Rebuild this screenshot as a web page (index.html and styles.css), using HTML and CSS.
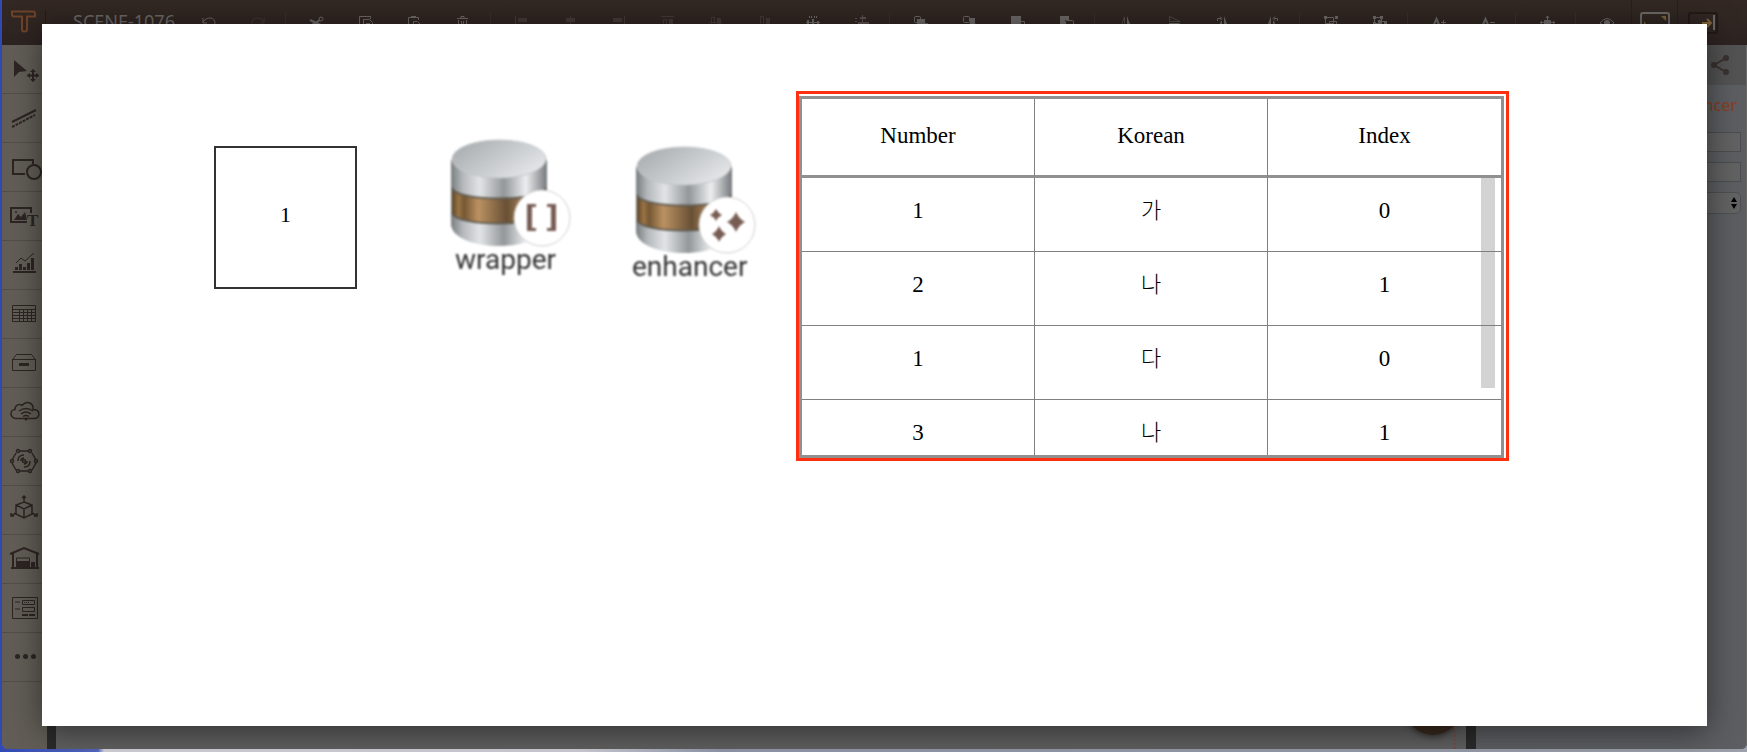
FILE: index.html
```html
<!DOCTYPE html>
<html lang="en">
<head>
<meta charset="utf-8">
<title>SCENE-1076</title>
<link rel="stylesheet" href="styles.css">
</head>
<body>
<div class="app">
  <header class="topbar">
    <a class="logo" href="#" aria-label="Home"><svg width="34" height="34" viewBox="0 0 34 34"><path d="M5 5.500h21q2 0 2 2v3h-8v13q0 2-2 2h-1q-2 0-2-2v-13h-8q-2 0-2-2v-3z"/></svg></a>
    <h1 class="title">SCENE-1076</h1>
    <div class="tools">
      <button aria-label="Undo"><svg viewBox="0 0 20 20"><path class="o" d="M8 10H4V5M4 9c4-6 12-5 12 1q0 5-6 6"/></svg></button>
      <button class="dim" aria-label="Redo"><svg viewBox="0 0 20 20"><path class="o" d="M12 10h4V5M16 9c-4-6-12-5-12 1q0 5 6 6"/></svg></button>
      <i class="sep"></i>
      <button aria-label="Cut"><svg viewBox="0 0 20 20"><path class="o" stroke-width="2" d="M3 7l13 6M3 13l10-6"/><circle class="o" cx="14" cy="6" r="2"/><circle class="o" cx="15" cy="14" r="2"/></svg></button>
      <button aria-label="Copy"><svg viewBox="0 0 20 20"><path class="o" d="M6 15H3.500V3.500h11V6M7.500 6.500h6l3 3v8h-9zM10 10.500h4M10 13.500h4"/></svg></button>
      <button aria-label="Paste"><svg viewBox="0 0 20 20"><path class="o" d="M7 16H4.500V4.500h10V7M7 3.500h5M9.500 8.500h4l3 3v6h-7z"/></svg></button>
      <button aria-label="Delete"><svg viewBox="0 0 20 20"><path class="o" d="M4 5.500h11M8 5V3.500h3V5M5.500 7v10h8V7M8.500 8v8M10.500 8v8"/></svg></button>
      <i class="sep"></i>
      <button class="dim" aria-label="Align left"><svg viewBox="0 0 20 20"><path d="M3 3h1v15H3zM6 5h9v4H6zM6 11h11v4H6z"/></svg></button>
      <button class="dim" aria-label="Align center"><svg viewBox="0 0 20 20"><path d="M9 3h1v15H9zM5 5h9v4H5zM4 11h11v4H4z"/></svg></button>
      <button class="dim" aria-label="Align right"><svg viewBox="0 0 20 20"><path d="M15 3h1v15h-1zM4 5h9v4H4zM2 11h11v4H2z"/></svg></button>
      <button class="dim" aria-label="Align top"><svg viewBox="0 0 20 20"><path d="M3 3h13v1H3zM11 6h4v7h-4z"/><path class="o" d="M5.500 17V6.500h3V17z"/></svg></button>
      <button class="dim" aria-label="Align middle"><svg viewBox="0 0 20 20"><path d="M3 9h13v1H3zM11 5h4v9h-4z"/><path class="o" d="M5.500 15.500v-11h3v11z"/></svg></button>
      <button class="dim" aria-label="Align bottom"><svg viewBox="0 0 20 20"><path d="M3 17h13v1H3zM11 5h4v10h-4z"/><path class="o" d="M5.500 15.500v-12h3v12z"/></svg></button>
      <button aria-label="Distribute horizontally"><svg viewBox="0 0 20 20"><path d="M3 9h14v1H3zM4 7h2v7H4zM9 6h2v9H9zM14 8h2v6h-2zM6 3h1v2H6zM8 3h1v2H8zM11 3h1v2h-1zM13 3h1v2h-1z"/></svg></button>
      <button class="mid" aria-label="Distribute vertically"><svg viewBox="0 0 20 20"><path d="M10 2h1v16h-1zM8 4h6v2H8zM6 9h11v2H6zM3 5h2v1H3zM3 8h2v1H3zM3 11h2v1H3z"/></svg></button>
      <i class="sep"></i>
      <button aria-label="Bring forward"><svg viewBox="0 0 20 20"><rect class="o" x="3.500" y="3.500" width="6" height="6" rx="1"/><path d="M6 6h8v8H6z"/><path class="o" d="M14 10.500h2.500v6h-6V14"/></svg></button>
      <button aria-label="Send backward"><svg viewBox="0 0 20 20"><path d="M10 5h5v6h-5z"/><rect class="o" x="3.500" y="3.500" width="6" height="6" rx="1"/><rect class="o" x="9.500" y="10.500" width="6" height="6" rx="1"/></svg></button>
      <button aria-label="Bring to front"><svg viewBox="0 0 20 20"><path d="M3 3h10v10H3z"/><path class="o" d="M13 8.500h3.500v8h-8V13"/></svg></button>
      <button aria-label="Send to back"><svg viewBox="0 0 20 20"><path d="M3 3h9v4H8v5H3z"/><rect class="o" x="8.500" y="7.500" width="8" height="8" rx="1"/></svg></button>
      <i class="sep"></i>
      <button aria-label="Flip horizontally"><svg viewBox="0 0 20 20"><path d="M11 3l5 13h-5z"/><path class="o" opacity=".5" d="M8.500 4v12H4z"/></svg></button>
      <button aria-label="Flip vertically"><svg viewBox="0 0 20 20"><path d="M4 10h12L4 15z"/><path class="o" opacity=".5" d="M4.500 3.500v5H15z"/></svg></button>
      <button aria-label="Rotate right"><svg viewBox="0 0 20 20"><path d="M11 3l5 13h-5z"/><path class="o" d="M8.500 8v8H5zM4.500 8V5.500H8M7 3.500l2 2-2 2"/></svg></button>
      <button aria-label="Rotate left"><svg viewBox="0 0 20 20"><path d="M9 3L4 16h5z"/><path class="o" d="M11.500 8v8H15zM15.500 8V5.500H12M13 3.500l-2 2 2 2"/></svg></button>
      <i class="sep"></i>
      <button aria-label="Group"><svg viewBox="0 0 20 20"><path d="M3 3h3v3H3zM14 3h3v3h-3zM3 14h3v3H3zM14 14h3v3h-3z"/><path class="o" d="M6 4.500h6.500v6H4.500V6M8.500 14V8.500h7V14"/></svg></button>
      <button aria-label="Ungroup"><svg viewBox="0 0 20 20"><path d="M3 3h3v3H3zM10 3h3v3h-3zM3 9h3v3H3zM8 7h3v3H8zM14 8h3v3h-3zM14 14h3v3h-3z"/><path class="o" d="M4.500 4.500h7v6h-7zM8.500 15.500v-7h7v7z"/></svg></button>
      <i class="sep"></i>
      <button aria-label="Increase font"><svg viewBox="0 0 20 20"><path class="o" stroke-width="2" d="M3 16L7.500 6 12 16M5 12h5"/><path class="o" d="M12 9.500h5M14.500 7v5"/></svg></button>
      <button aria-label="Decrease font"><svg viewBox="0 0 20 20"><path class="o" stroke-width="2" d="M3 16L7.500 6 12 16M5 12h5"/><path class="o" d="M12 9.500h5"/></svg></button>
      <i class="sep"></i>
      <button aria-label="Fit"><svg viewBox="0 0 20 20"><path d="M7 7h7v6H7z"/><path class="o" d="M10.500 3v4M3 9.500h4M14 9.500h4M10.500 13v4M9 5l1.500-2L12 5M5 8L3 9.500 5 11M16 8l2 1.500-2 1.500"/></svg></button>
      <i class="sep"></i>
      <button aria-label="Preview"><svg viewBox="0 0 20 20"><path class="o" d="M3 10q7-9 14 0-7 8-14 0z"/><circle cx="10" cy="10" r="3"/></svg></button>
    </div>
    <button class="wide" aria-label="Full screen"><svg width="30" height="22" viewBox="0 0 30 22"><rect class="o" x="1" y="1" width="28" height="20" rx="2" stroke-width="2"/><path class="gold" d="M21 4h5v5zM4 9v9h6z"/></svg></button>
    <button class="wide last" aria-label="Hide panel"><svg width="30" height="22" viewBox="0 0 30 22"><rect class="edge" x="1" y="1" width="28" height="20" rx="2"/><path class="goldline" d="M14 11h8M19 7l4 4-4 4"/><path d="M25 3h2v15h-2z"/></svg></button>
  </header>
  <div class="main">
    <nav class="side">
      <button aria-label="Select"><svg viewBox="0 0 44 48"><path d="M12 15v17l5-5 8-1z"/><path class="o" stroke-width="2" d="M31 25v11M25.500 30.500h11"/><path d="M28 27l3-3 3 3zM28 34l3 3 3-3zM28 28l-3 2.500 3 2.500zM34 28l3 2.500-3 2.500z"/></svg></button>
      <button aria-label="Line"><svg viewBox="0 0 44 48"><path class="o" stroke-width="2" d="M10 28l24-12"/><path class="o" stroke-width="2" stroke-dasharray="3 1" d="M10 33l23-12"/></svg></button>
      <button aria-label="Shape"><svg viewBox="0 0 44 48"><path class="o" stroke-width="2" d="M23 31H11V17h20v4"/><circle class="o" stroke-width="2" cx="32" cy="29" r="7"/></svg></button>
      <button aria-label="Text and media"><svg viewBox="0 0 44 48"><path class="o" stroke-width="2" d="M25 30H9V16h20v5"/><path d="M12 28l4-6 3 3 4-5 2 8z"/><circle cx="14" cy="20" r="1"/><text x="25" y="34" class="glyph">T</text></svg></button>
      <button aria-label="Chart"><svg viewBox="0 0 44 48"><path d="M11 30h23v2H11zM13 26h3v3h-3zM17 23h3v6h-3zM21 26h3v3h-3zM25 22h3v7h-3zM29 17h3v12h-3z"/><path class="o" d="M14 22l5-5 4 3 9-8"/></svg></button>
      <button aria-label="Table"><svg viewBox="0 0 44 48"><path class="o" d="M10.500 15.500h23v16h-23zM10.500 19.500h23M10.500 22.500h23M10.500 25.500h23M10.500 28.500h23M17.500 19.500v12M21.500 19.500v12M25.500 19.500v12M29.500 19.500v12"/></svg></button>
      <button aria-label="Container"><svg viewBox="0 0 44 48"><path class="o" d="M10.500 20.500h23v11h-23zl4-5h15l4 5"/><path d="M17 24h10v3H17z"/></svg></button>
      <button aria-label="Data source"><svg viewBox="0 0 44 48"><g class="o" stroke-width="1.500"><path d="M14 30.500c-7-1-6-9-1-9 0-5 5-6 7-4 5-6 12-2 11 4 8 0 7 8 2 9H14M17 23q7-5 14 0M19 26q5-4 10 0M21 28.500q3-2 6 0"/></g><circle cx="24" cy="31" r="1.500"/></svg></button>
      <button aria-label="IoT"><svg viewBox="0 0 44 48"><g class="o" stroke-width="1.500"><path d="M18 14h8M30 16l4 7M34 26l-4 7M26 34h-8M14 33l-4-7M10 23l4-7M16 24q0-6 6-6M19 24q0-3 3-3M28 24q0 6-6 6M25 24q0 3-3 3"/><circle cx="22" cy="24" r="1.500"/><circle cx="16" cy="14" r="1.500"/><circle cx="28" cy="14" r="1.500"/><circle cx="10" cy="24" r="1.500"/><circle cx="34" cy="24" r="1.500"/><circle cx="16" cy="34" r="1.500"/><circle cx="28" cy="34" r="1.500"/></g></svg></button>
      <button aria-label="3D"><svg viewBox="0 0 44 48"><g class="o" stroke-width="1.500"><path d="M22 16l8 3v9l-8 4-8-4v-9zM14 19l8 4 8-4M22 23v9M22 16v-6M20 12l2-2 2 2M14 27l-5 3M9 27v3h3M30 27l5 3M35 27v3h-3"/></g></svg></button>
      <button aria-label="Warehouse"><svg viewBox="0 0 44 48"><path class="o" stroke-width="2" d="M8 19l14-6 15 6M11 18v15M35 18v15M9 33h28"/><path class="o" d="M14.500 33v-10h13v10"/><path d="M14 26h14v7H14zM29 27h4v6h-4z"/></svg></button>
      <button aria-label="Form"><svg viewBox="0 0 44 48"><path class="o" d="M10.500 13.500h25v21h-25zM20.500 16.500h12v4h-12zM20.500 23.500h12v4h-12z"/><path d="M20 30h6v2h-6zM27 30h6v2h-6zM22 18h1v1h-1zM24 18h1v1h-1zM26 18h1v1h-1z"/><path opacity=".5" d="M13 17h5v2h-5zM13 24h5v2h-5z"/></svg></button>
      <button aria-label="More"><svg viewBox="0 0 44 48"><circle cx="15.500" cy="23.500" r="2.500"/><circle cx="23.500" cy="23.500" r="2.500"/><circle cx="31.500" cy="23.500" r="2.500"/></svg></button>
    </nav>
    <div class="stage"><span class="fab"></span><span class="guide"></span></div>
    <aside class="panel">
      <div class="tabs"><button aria-label="Share"><svg width="20" height="22" viewBox="0 0 20 22"><path class="o" stroke-width="2" d="M16 4L4 11l12 7"/><circle cx="16" cy="4" r="3"/><circle cx="4" cy="11" r="3"/><circle cx="16" cy="18" r="3"/></svg></button></div>
      <h2>enhancer</h2>
      <input type="text" aria-label="ID">
      <input type="text" aria-label="Class">
      <div class="pick"><select aria-label="Target"><option></option></select><svg width="6" height="12" viewBox="0 0 6 12"><path d="M3 0l3 5H0zM3 12l3-5H0z"/></svg></div>
    </aside>
  </div>
</div>

<div class="modal" role="dialog" aria-label="Preview">
  <svg class="defs" aria-hidden="true">
    <defs>
      <linearGradient id="steel"><stop offset="0" stop-color="#777c7e"/><stop offset=".12" stop-color="#b4b8ba"/><stop offset=".3" stop-color="#e2e4e6"/><stop offset=".55" stop-color="#929799"/><stop offset=".78" stop-color="#eceeef"/><stop offset="1" stop-color="#74797b"/></linearGradient>
      <linearGradient id="lid" x2="1" y2=".6"><stop offset="0" stop-color="#a2a7aa"/><stop offset="1" stop-color="#e2e4e6"/></linearGradient>
      <linearGradient id="band"><stop offset="0" stop-color="#5e4526"/><stop offset=".07" stop-color="#9a7445"/><stop offset=".13" stop-color="#755733"/><stop offset=".28" stop-color="#bb9262"/><stop offset=".58" stop-color="#685035"/><stop offset=".8" stop-color="#b58d5e"/><stop offset="1" stop-color="#4a3218"/></linearGradient>
      <g id="drum">
        <path fill="url(#steel)" d="M1 21v65c4 28 92 28 96 0V21z"/>
        <path fill="url(#band)" d="M2 49c4 14 90 14 94 0v25c-4 14-90 14-94 0z"/>
        <path class="rim" d="M2 49c4 14 90 14 94 0M2 74c4 14 90 14 94 0"/>
        <ellipse cx="49" cy="20" rx="47" ry="19" fill="url(#lid)" stroke="#c4c7c9"/>
        <circle cx="92" cy="79" r="28" fill="#fff" stroke="#ccc"/>
      </g>
    </defs>
  </svg>
  <div class="box">1</div>
  <figure class="node wrapper">
    <svg width="122" height="107" viewBox="0 0 122 107"><use href="#drum"/><path class="mark" d="M77 65h9v3h-4v21h4v3h-9zM106 65h-9v3h4v21h-4v3h9z"/></svg>
    <figcaption>wrapper</figcaption>
  </figure>
  <figure class="node enhancer">
    <svg width="122" height="107" viewBox="0 0 122 107"><use href="#drum"/><path class="mark" d="M101 66q3 7 9 10-6 3-9 10-3-7-9-10 6-3 9-10zM81 63q2 4 6 6-4 2-6 6-2-4-6-6 4-2 6-6zM84 80q2 5 7 8-5 3-7 8-2-5-7-8 5-3 7-8z"/></svg>
    <figcaption>enhancer</figcaption>
  </figure>
  <div class="selection">
    <div class="grid">
      <span class="thumb"></span>
      <table>
        <thead><tr><th>Number</th><th>Korean</th><th>Index</th></tr></thead>
        <tbody>
          <tr><td>1</td><td lang="ko">가</td><td>0</td></tr>
          <tr><td>2</td><td lang="ko">나</td><td>1</td></tr>
          <tr><td>1</td><td lang="ko">다</td><td>0</td></tr>
          <tr><td>3</td><td lang="ko">나</td><td>1</td></tr>
        </tbody>
      </table>
    </div>
  </div>
</div>
</body>
</html>
```
FILE: styles.css
```css
* { box-sizing: border-box; }
html, body { height: 100%; }
body {
  margin: 0;
  padding: 0 0 3px 2px;
  overflow: hidden;
  background: linear-gradient(90deg, #3149b5 0, #5468c0 98px, #d4d3da 104px, #d0cfd8 580px, #9299ac 720px, #9ba0aa 100%);
  font-family: "Noto Sans", "Open Sans", sans-serif;
}
button { padding: 0; border: 0; background: none; font: inherit; color: inherit; }
svg { display: block; fill: currentColor; }
.o { fill: none; stroke: currentColor; }

.app { height: 100%; display: flex; flex-direction: column; border-radius: 0 0 6px 6px; overflow: hidden; background: #5e5e5e; }
.topbar { height: 45px; flex: none; display: flex; align-items: center; background: linear-gradient(#332823, #2d2422); color: #6c6867; }
.logo { width: 44px; height: 26px; border-right: 1px solid #231b19; color: #6d4329; display: flex; align-items: center; padding-left: 5px; }
.logo path { fill: none; stroke: currentColor; stroke-width: 2; }
.title { margin: 0; padding: 0 0 4px 27px; width: 139px; font-size: 18px; line-height: 24px; font-weight: 400; white-space: nowrap; }
.tools { flex: 1; height: 20px; display: flex; align-items: center; }
.tools button { flex: 1 1 0; display: flex; justify-content: center; }
.tools svg { width: 20px; height: 20px; }
.sep { width: 11px; height: 20px; padding-left: 3px; }
.sep::before { content: ""; display: block; width: 1px; height: 20px; background: #3b302e; }
.tools .dim { color: #443a39; }
.tools .mid { color: #5b5251; }
.wide { height: 45px; width: 46px; padding: 0 8px; border-left: 1px solid #28201e; }
.last { width: 70px; padding: 0 10px; }
.gold { fill: #7c6338; }
.goldline { fill: none; stroke: #7c6338; stroke-width: 2; }
.edge { fill: none; stroke: #221a19; stroke-width: 2; }

.main { flex: 1; min-height: 0; display: flex; }
.side { width: 45px; flex: none; display: flex; flex-direction: column; background: #625e57; color: #2d2523; }
.side button { height: 49px; border-bottom: 1px solid #524e49; }
.side svg { width: 44px; height: 48px; }
.glyph { font: bold 17px "Liberation Serif", serif; }
.stage { flex: 1; position: relative; border: solid #2b2b2b; border-width: 0 10px 0 9px; background: #606060; }
.fab { position: absolute; right: 5px; bottom: 14px; width: 56px; height: 56px; border-radius: 50%; background: #3a291d; box-shadow: 0 2px 6px #333; }
.guide { position: absolute; right: 10px; bottom: 0; height: 30px; border-right: 2px dotted #7b4a44; }
.panel { width: 271px; flex: none; background: #5c5e61; border-right: 1px solid #6b6b6b; padding-right: 5px; display: flex; flex-direction: column; }
.tabs { height: 40px; margin-right: -5px; padding-right: 16px; background: #535353; display: flex; align-items: center; justify-content: flex-end; color: #3a3231; }
.panel h2 { margin: 8px 4px 15px 16px; font-size: 16px; line-height: 24px; font-weight: 400; text-align: right; color: #8a3c20; }
.panel input { height: 20px; margin: 0 0 10px 80px; border: 1px solid #4b4d50; background: #626262; }
.pick { position: relative; margin-left: 80px; }
.pick select { display: block; appearance: none; width: 100%; height: 22px; border: 1px solid #4d4f52; border-radius: 5px; background: #636363; }
.pick svg { position: absolute; right: 4px; top: 5px; color: #000; }

.modal { position: absolute; inset: 24px 40px 26px 42px; background: #fff; box-shadow: 0 5px 30px rgba(0, 0, 0, .5); overflow: visible; color: #000; }
.defs { position: absolute; width: 0; height: 0; }
.box { position: absolute; left: 172px; top: 122px; width: 143px; height: 143px; border: 2px solid #333; display: grid; place-items: center; font: 22px "Liberation Serif", serif; padding-bottom: 6px; }
.node { position: absolute; margin: 0; display: flex; flex-direction: column; filter: blur(.8px); color: #333; }
.node figcaption { font: 28px/28px Roboto, sans-serif; }
.wrapper { left: 408px; top: 115px; }
.wrapper figcaption { padding-left: 5px; }
.enhancer { left: 593px; top: 122px; }
.node svg { overflow: visible; }
.enhancer figcaption { margin-left: -3px; }
.mark { fill: #785c54; }
.rim { fill: none; stroke: #5f5a52; stroke-width: 2; }
.selection { position: absolute; left: 754px; top: 67px; width: 713px; height: 370px; border: 3px solid #ff2f12; padding: 2px 2px 0 0; }
.grid { position: relative; height: 100%; border: 3px solid #909090; overflow: hidden; }
.thumb { position: absolute; right: 6px; top: 79px; width: 14px; height: 210px; background: #d3d3d3; }
table { position: relative; width: 100%; table-layout: fixed; border-collapse: separate; border-spacing: 0; font: 23px/26px "Liberation Serif", "Noto Sans CJK KR", serif; text-align: center; }
th, td { padding: 0 0 6px; border-right: 1px solid #808080; }
th:last-child, td:last-child { border-right: 0; }
th { height: 79px; padding-bottom: 3px; font-weight: 400; border-bottom: 3px solid #909090; }
td { height: 74px; padding-bottom: 8px; border-bottom: 1px solid #808080; }
td:lang(ko) { font-weight: 300; font-size: 22px; }
```
